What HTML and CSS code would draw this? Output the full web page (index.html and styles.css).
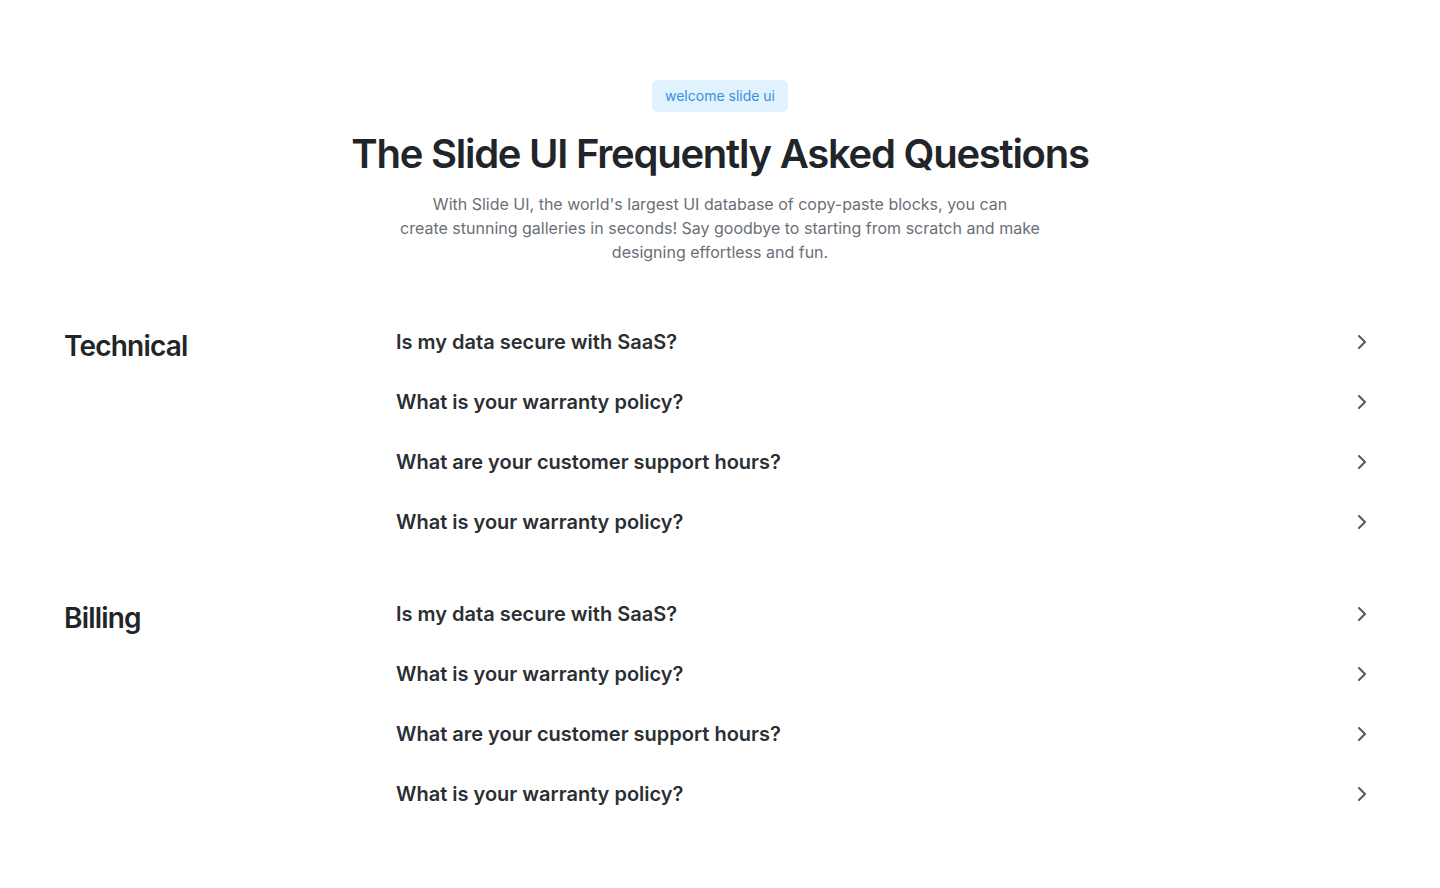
FILE: index.html
```html
<!DOCTYPE html>
<html lang="en">
<head>
<meta charset="utf-8">
<title>FAQ</title>
<link rel="stylesheet" href="styles.css">
</head>
<body>
<main class="page">
  <header class="hero">
    <span class="badge">welcome slide ui</span>
    <h1 class="title">The Slide UI Frequently Asked Questions</h1>
    <p class="lead">With Slide UI, the world's largest UI database of copy-paste blocks, you can<br>create stunning galleries in seconds! Say goodbye to starting from scratch and make designing effortless and fun.</p>
  </header>

  <section class="group">
    <h2 class="group-title">Technical</h2>
    <ul class="faq">
      <li class="faq-item"><span>Is my data secure with SaaS?</span><svg class="chev" viewBox="0 0 24 24"><path d="m9 18 6-6-6-6"/></svg></li>
      <li class="faq-item"><span>What is your warranty policy?</span><svg class="chev" viewBox="0 0 24 24"><path d="m9 18 6-6-6-6"/></svg></li>
      <li class="faq-item"><span>What are your customer support hours?</span><svg class="chev" viewBox="0 0 24 24"><path d="m9 18 6-6-6-6"/></svg></li>
      <li class="faq-item"><span>What is your warranty policy?</span><svg class="chev" viewBox="0 0 24 24"><path d="m9 18 6-6-6-6"/></svg></li>
    </ul>
  </section>

  <section class="group">
    <h2 class="group-title">Billing</h2>
    <ul class="faq">
      <li class="faq-item"><span>Is my data secure with SaaS?</span><svg class="chev" viewBox="0 0 24 24"><path d="m9 18 6-6-6-6"/></svg></li>
      <li class="faq-item"><span>What is your warranty policy?</span><svg class="chev" viewBox="0 0 24 24"><path d="m9 18 6-6-6-6"/></svg></li>
      <li class="faq-item"><span>What are your customer support hours?</span><svg class="chev" viewBox="0 0 24 24"><path d="m9 18 6-6-6-6"/></svg></li>
      <li class="faq-item"><span>What is your warranty policy?</span><svg class="chev" viewBox="0 0 24 24"><path d="m9 18 6-6-6-6"/></svg></li>
    </ul>
  </section>
</main>
</body>
</html>
```

FILE: styles.css
```css
* { box-sizing: border-box; }
html, body { margin: 0; padding: 0; background: #ffffff; }
body {
  font-family: Inter, "Noto Sans", "Liberation Sans", sans-serif;
  color: #1f2328;
}
.page {
  padding: 80px 64px 40px;
}
.hero {
  display: flex;
  flex-direction: column;
  align-items: center;
  text-align: center;
}
.badge {
  display: inline-block;
  background: #e0f2fe;
  color: #3b8fe0;
  font-size: 14px;
  line-height: 20px;
  padding: 6px 13px;
  border-radius: 6px;
}
.title {
  margin: 18px 0 0;
  font-size: 40px;
  line-height: 48px;
  font-weight: 600;
  letter-spacing: -1.25px;
  color: #212529;
}
.lead {
  margin: 14px 0 0;
  max-width: 660px;
  font-size: 16px;
  line-height: 24px;
  color: #6b6f76;
}
.group {
  display: grid;
  grid-template-columns: 300px 1fr;
  column-gap: 32px;
  margin-top: 48px;
}
.group + .group { margin-top: 32px; }
.group-title {
  margin: 16px 0 0;
  font-size: 28px;
  line-height: 36px;
  font-weight: 600;
  letter-spacing: -0.8px;
  color: #212529;
}
.faq {
  list-style: none;
  margin: 0;
  padding: 0;
}
.faq-item {
  display: flex;
  align-items: center;
  justify-content: space-between;
  height: 60px;
  font-size: 20px;
  font-weight: 600;
  color: #2b2f33;
}
.chev {
  width: 24px;
  height: 24px;
  margin-right: 2px;
  fill: none;
  stroke: #55595f;
  stroke-width: 2;
  stroke-linecap: round;
  stroke-linejoin: round;
}
```
